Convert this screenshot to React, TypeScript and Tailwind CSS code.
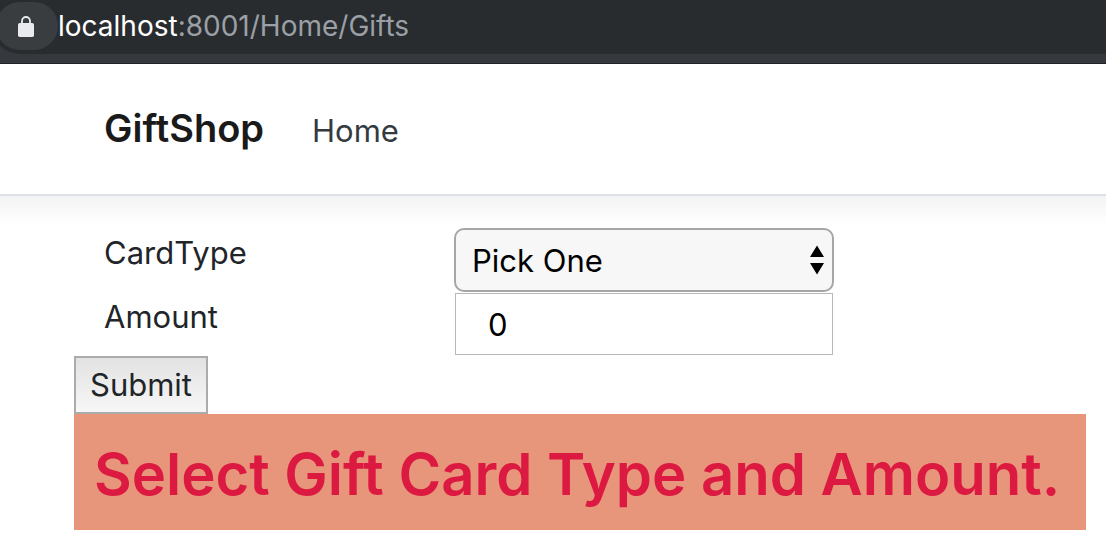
import { useState } from "react";

function AddressBar() {
  return (
    <div className="h-16 overflow-hidden border-b border-[#202225] bg-[#35383c]">
      <div className="-ml-2 flex h-[54px] items-center rounded-bl-[28px] bg-[#292c2f] pb-[2px] pl-1">
        <button type="button" aria-label="Site information" className="flex h-12 w-[62px] shrink-0 items-center justify-center rounded-full bg-[#3a3d40] pr-[2px]">
          <svg viewBox="0 0 16 21" className="h-[21px] w-4" aria-hidden="true">
            <path d="M4 8V5a4 4 0 0 1 8 0v3" fill="none" stroke="#e8eaed" strokeWidth="1.8" />
            <rect x="0" y="7" width="16" height="14" rx="1.8" fill="#e8eaed" />
          </svg>
        </button>
        <p className="text-[28px] leading-8 text-[#9aa0a6]">
          <span className="text-white">localhost</span>:8001/Home/Gifts
        </p>
      </div>
    </div>
  );
}

export default function App() {
  const [amount, setAmount] = useState("0");
  return (
    <div className="overflow-x-hidden bg-white font-['Inter','Liberation_Sans',sans-serif] text-[#212529]">
      <AddressBar />
      <header className="border-b-2 border-[#dee2e6]">
        <nav className="flex h-[130px] items-baseline gap-12 px-[104px] pt-10">
          <a href="#" className="text-[38px] leading-[48px] font-semibold text-[#1a1a1a]">GiftShop</a>
          <a href="#" className="text-[31px] leading-10 text-[#343a40]">Home</a>
        </nav>
      </header>
      <main className="bg-[linear-gradient(#f3f3f3,#f8f8f8_12px,#fdfdfd_24px,#fff_32px)] pt-8 pr-5 pl-[74px]">
        <form onSubmit={(e) => e.preventDefault()}>
          <div className="flex h-16 pl-[30px]">
            <label htmlFor="card" className="w-[350px] pt-[5px] text-[31px] leading-10">CardType</label>
            <div className="relative w-[380px]">
              <select id="card" className="h-16 w-full appearance-none rounded-[10px] border-2 border-[#a6a6a6] bg-[#f7f7f7] px-4 pt-[2px] text-[31px] text-black">
                <option>Pick One</option>
              </select>
              <svg viewBox="0 0 16 30" className="pointer-events-none absolute top-[17px] right-[9px] h-[30px] w-4" aria-hidden="true">
                <path d="M8 .5l7 11.5H1zM8 29.5L15 18H1z" fill="#000" />
              </svg>
            </div>
          </div>
          <div className="flex h-16 pl-[30px]">
            <label htmlFor="amount" className="w-[350px] pt-[5px] text-[31px] leading-10">Amount</label>
            <div className="w-[380px] p-px">
              <input id="amount" value={amount} onChange={(e) => setAmount(e.target.value)} className="h-[62px] w-full border border-[#b8b8b8] bg-white px-8 text-[31px] text-black" />
            </div>
          </div>
          <button type="submit" className="block h-[58px] border-2 border-[#ababab] bg-linear-to-b from-[#e2e2e2] to-[#f7f7f7] px-[14px] text-[31px]">Submit</button>
        </form>
        <h1 className="bg-[#e7957b] px-5 pt-1 text-[58px] leading-[112px] font-semibold whitespace-nowrap text-[#dc1a41]">Select Gift Card Type and Amount.</h1>
      </main>
    </div>
  );
}
